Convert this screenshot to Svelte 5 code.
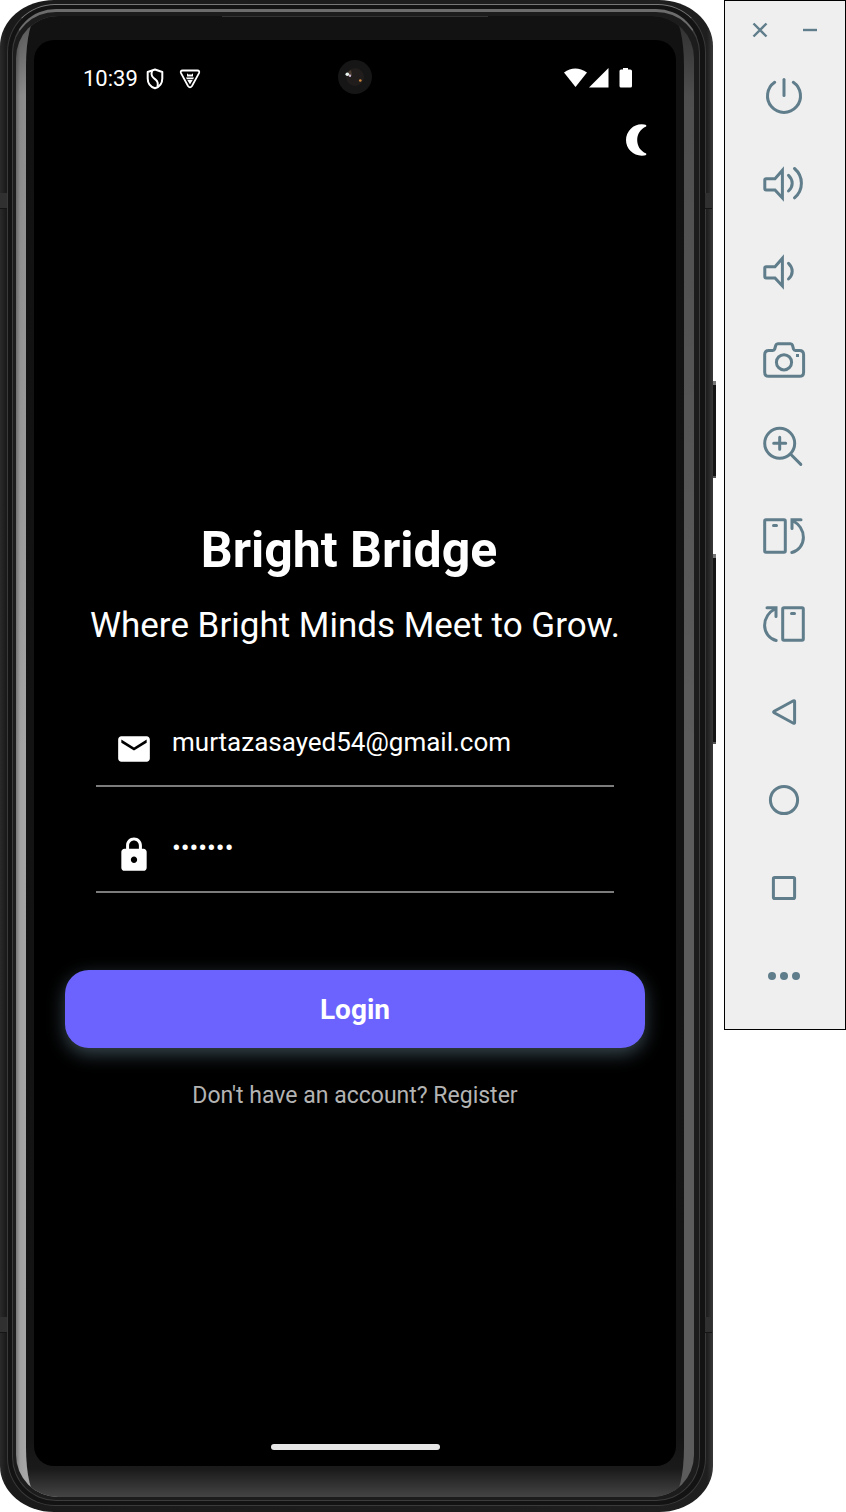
<script>
  let email = $state('murtazasayed54@gmail.com');
  let password = $state('bridge7');

  const speaker = 'M13 16.7H4.2Q2.8 16.7 2.8 18V26.6Q2.8 28 4.2 28H13L20.4 36V8.2Z';
  const phone = 'M4 5.700H22Q23.300 5.700 23.300 7V37Q23.300 38.300 22 38.300H4Q2.700 38.300 2.700 37V7Q2.700 5.700 4 5.700Z';
  const notch = 'M11.500 11.600H14.500';
  const turn = 'M39 5.700H30V14.600M30.500 6.500C37 10 41.400 16.500 41.400 23.500C41.400 30.500 36.500 37 29.800 38.500';

  const tools = [
    { label: 'Power', paths: ['M12.700 8.300A16.500 16.500 0 1 0 31.300 8.300', 'M22 5.500V21.500'] },
    { label: 'Volume up', paths: [speaker, 'M26.500 13.300Q30.200 16.800 30.200 21.200T26.500 29', 'M32.500 6.500Q39.400 12.500 39.400 21.200T32.500 35.800'] },
    { label: 'Volume down', paths: [speaker, 'M26.500 13.300Q30.200 16.800 30.200 21.200T26.500 29'] },
    {
      label: 'Take screenshot',
      paths: [
        'M6 12.400H10.800Q12.300 12.400 12.700 11L13.800 7.300Q14.300 5.700 15.800 5.700H28.500Q30 5.700 30.500 7.300L31.500 11Q32 12.400 33.400 12.400H37.500Q41.600 12.400 41.600 16.500V34.200Q41.600 38.300 37.500 38.300H6.800Q2.700 38.300 2.700 34.200V16.500Q2.700 12.400 6.800 12.400',
        'M14.400 24.300a7.600 7.600 0 1 0 15.200 0a7.600 7.600 0 1 0 -15.200 0'
      ],
      fill: 'M34 16h3v3h-3z'
    },
    { label: 'Zoom', paths: ['M2.700 17.300a15 15 0 1 0 30 0a15 15 0 1 0 -30 0', 'M11.700 17.300H23.700M17.700 11.300V23.300', 'M28.700 28.300L38.800 38.400'] },
    { label: 'Rotate left', paths: [phone, notch, turn] },
    { label: 'Rotate right', mirror: true, paths: [phone, notch, turn] },
    { label: 'Back', paths: ['M31.400 10.800Q32.600 10.300 32.600 11.600V32.400Q32.600 33.700 31.400 33.200L12.200 22.800Q11 22 12.200 21.200Z'] },
    { label: 'Home', paths: ['M8.400 22a13.600 13.600 0 1 0 27.200 0a13.600 13.600 0 1 0 -27.200 0'] },
    { label: 'Overview', paths: ['M12.700 11.400H31.300Q32.600 11.400 32.600 12.700V31.300Q32.600 32.600 31.300 32.600H12.700Q11.400 32.600 11.400 31.300V12.700Q11.400 11.400 12.700 11.400Z'] },
    { label: 'More', paths: [], fill: 'M6 22a4 4 0 1 0 8 0a4 4 0 1 0 -8 0M18 22a4 4 0 1 0 8 0a4 4 0 1 0 -8 0M30 22a4 4 0 1 0 8 0a4 4 0 1 0 -8 0' }
  ];
</script>

<div class="page">
  <div class="device">
    <span class="key power"></span>
    <span class="key volume"></span>
    <div class="shell">
      <span class="seam upper left"></span>
      <span class="seam upper right"></span>
      <span class="seam lower left"></span>
      <span class="seam lower right"></span>
      <div class="rim">
        <div class="band">
          <div class="glass">
            <div class="bezel">
              <span class="earpiece"></span>
              <div class="screen">
                <header class="status">
                  <span class="clock">10:39</span>
                  <svg class="shield" viewBox="0 0 18 22" width="18" height="22" fill="none" stroke="#fff" stroke-width="2" stroke-linejoin="round">
                    <path d="M9 1.500L16.300 4V10.500C16.300 15.500 13 19 9 20.300C5 19 1.700 15.500 1.700 10.500V4Z" />
                    <path d="M6 2.800C4.500 8 7 9.500 9.500 11.500C12 13.500 12.300 15.500 11.500 18.500" />
                  </svg>
                  <svg class="debug" viewBox="0 0 22 20" width="22" height="20">
                    <path d="M3.600 1.500H18.400Q21 1.700 20 4.200L13 17Q11 19.600 9 17L2 4.200Q1 1.700 3.600 1.500Z" fill="none" stroke="#fff" stroke-width="1.800" />
                    <path d="M8 4.300L9.200 5.500H12.800L14 4.300V7.600H8ZM7 8.600H15L14.200 10.200H7.800ZM8.300 11H13.700L11 15.600Z" fill="#fff" />
                  </svg>
                  <span class="lens">
                    <svg viewBox="0 0 34 34" width="34" height="34">
                      <circle cx="17" cy="17" r="17" fill="#161616" />
                      <circle cx="17" cy="17" r="9" fill="#211d1c" />
                      <path d="M9 15Q10 11 13 10L14 15L11 17Z" fill="#4a3c31" />
                      <circle cx="9.300" cy="14.300" r="1.800" fill="#e9f7f0" />
                      <circle cx="12" cy="15.800" r="1.200" fill="#c9b4d2" />
                      <circle cx="22.300" cy="20.500" r="1.300" fill="#d08a3c" />
                    </svg>
                  </span>
                  <svg class="signals" viewBox="0 0 70 22" width="70" height="22" fill="#fff">
                    <path d="M1 5.500Q12 -2.500 24 5.500L12.500 20Z" />
                    <path d="M45.500 1V20.500H26Z" />
                    <path d="M60 1H65V2.500H67.300Q69 2.500 69 4V19Q69 20.500 67.500 20.500H58Q56.500 20.500 56.500 19V4Q56.500 2.500 58 2.500H60Z" />
                  </svg>
                </header>
                <div class="appbar">
                  <button class="theme" aria-label="Toggle dark mode">
                    <svg viewBox="0 0 22 32" width="22" height="32" fill="#fff">
                      <path d="M15.700 .3Q18.600 .3 20.200 1V2.500C14 5 11.200 10.500 11.200 16C11.200 21.500 14 27 20.200 29.500V31Q18.600 31.700 15.700 31.700A15.700 15.700 0 0 1 15.700 .3Z" />
                    </svg>
                  </button>
                </div>
                <main>
                  <h1>Bright Bridge</h1>
                  <p class="tagline">Where Bright Minds Meet to Grow.</p>
                  <form onsubmit={(e) => e.preventDefault()}>
                    <div class="fields">
                      <label class="field">
                        <svg viewBox="0 0 24 24" width="38" height="38" fill="#fff" role="img" aria-label="Email">
                          <path d="M20 4H4c-1.100 0-2 .9-2 2v12c0 1.100.9 2 2 2h16c1.100 0 2-.9 2-2V6c0-1.100-.9-2-2-2zm0 4l-8 5-8-5V6l8 5 8-5v2z" />
                        </svg>
                        <input type="email" bind:value={email} />
                      </label>
                      <label class="field">
                        <svg viewBox="0 0 24 24" width="38" height="38" fill="#fff" role="img" aria-label="Password">
                          <path d="M18 8h-1V6c0-2.760-2.240-5-5-5S7 3.240 7 6v2H6c-1.100 0-2 .9-2 2v10c0 1.100.9 2 2 2h12c1.100 0 2-.9 2-2V10c0-1.100-.9-2-2-2zm-6 9c-1.100 0-2-.9-2-2s.9-2 2-2 2 .9 2 2-.9 2-2 2zm3.100-9H8.900V6c0-1.710 1.390-3.100 3.100-3.100s3.100 1.390 3.100 3.100v2z" />
                        </svg>
                        <input type="password" bind:value={password} />
                      </label>
                    </div>
                    <button class="login">Login</button>
                  </form>
                  <a class="register" href="#register">Don't have an account? Register</a>
                </main>
                <span class="homebar"></span>
              </div>
            </div>
          </div>
        </div>
      </div>
    </div>
  </div>

  <aside class="toolbar">
    <div class="window">
      <button aria-label="Close">
        <svg viewBox="0 0 16 16" width="16" height="16"><path d="M1.500 1.500L14.500 14.500M14.500 1.500L1.500 14.500" /></svg>
      </button>
      <button aria-label="Minimize">
        <svg viewBox="0 0 16 16" width="16" height="16"><path d="M1 8H15" /></svg>
      </button>
    </div>
    {#each tools as tool}
      <button class="tool" aria-label={tool.label}>
        <svg viewBox="0 0 44 44" width="44" height="44">
          <g transform={tool.mirror ? 'translate(44 0) scale(-1 1)' : undefined}>
            {#each tool.paths as d}
              <path {d} />
            {/each}
            {#if tool.fill}
              <path class="solid" d={tool.fill} />
            {/if}
          </g>
        </svg>
      </button>
    {/each}
  </aside>
</div>

<style>
  :global(body) {
    margin: 0;
    background: #fff;
  }
  .page {
    display: flex;
    align-items: flex-start;
    gap: 11px;
    min-height: 100vh;
    font-family: Roboto, sans-serif;
  }
  button {
    margin: 0;
    padding: 0;
    border: 0;
    background: none;
    font-family: inherit;
    cursor: pointer;
  }
  svg {
    display: block;
    flex: none;
  }
  .device,
  .shell,
  .rim,
  .band,
  .glass,
  .bezel,
  .screen {
    box-sizing: border-box;
    display: flex;
    flex-direction: column;
    flex: 1;
    min-width: 0;
  }
  .device {
    position: relative;
    min-height: 100vh;
  }
  .key {
    position: absolute;
    right: -3px;
    width: 5px;
    box-sizing: border-box;
    background: #151515;
    border-top: 4px solid #777;
    border-bottom: 2px solid #555;
  }
  .power {
    top: 381px;
    height: 97px;
  }
  .volume {
    top: 554px;
    height: 190px;
  }
  .shell {
    position: relative;
    padding: 4px 7px 6px 7px;
    border-radius: 54px / 46px;
    background: linear-gradient(90deg, #2a2a2a, #1a1a1a 6px, #1f1f1f calc(100% - 6px), #383838);
  }
  .seam {
    position: absolute;
    width: 7px;
    height: 15px;
    background: #303030;
    border-bottom: 1px solid #151515;
  }
  .seam.upper {
    top: 193px;
  }
  .seam.lower {
    bottom: 179px;
  }
  .seam.left {
    left: 0;
  }
  .seam.right {
    right: 1px;
  }
  .rim {
    padding: 4px 5px 4px 4px;
    border: 1px solid #3a3a3a;
    border-top-color: #777;
    border-radius: 48px;
    background: #131313;
  }
  .band {
    padding: 4px 5px 3px 3px;
    border: 1px solid #3c3c3c;
    border-top: 3px solid #6c6c6c;
    border-radius: 44px;
    background: #1c1c1c;
  }
  .glass {
    padding: 0 10px;
    border-radius: 42px;
    overflow: hidden;
    background:
      linear-gradient(180deg, rgba(0, 0, 0, 0.5), rgba(0, 0, 0, 0.15) 80px, transparent 50%),
      linear-gradient(90deg, #777, #a0a0a0 4px, #a6a6a6 9px, #5a5a5a 50%, #5c5c5c);
  }
  .bezel {
    position: relative;
    padding: 24px 8px 31px;
    border-radius: 12px / 50px;
    background: linear-gradient(0deg, #444, #1a1a1a 28px, #141414 60px, #121212);
  }
  .earpiece {
    position: absolute;
    top: 0;
    left: 50%;
    width: 266px;
    height: 1px;
    transform: translateX(-50%);
    background: #333;
  }
  .screen {
    border-radius: 20px;
    background: #000;
    color: #fff;
  }
  .status {
    position: relative;
    display: flex;
    align-items: center;
    height: 76px;
    padding: 0 43px 0 49px;
  }
  .clock {
    padding-top: 2px;
    font-size: 22px;
    line-height: 28px;
  }
  .shield {
    margin-left: 8px;
    padding-top: 2px;
  }
  .debug {
    margin-left: 15px;
    padding-top: 2px;
  }
  .signals {
    margin-left: auto;
  }
  .lens {
    position: absolute;
    left: 50%;
    top: 20px;
    transform: translateX(-50%);
  }
  .appbar {
    display: flex;
    justify-content: flex-end;
    align-items: center;
    height: 48px;
    padding-right: 28px;
  }
  main {
    flex: 1;
    display: flex;
    flex-direction: column;
    justify-content: center;
    padding: 28px 31px 0;
    text-align: center;
  }
  h1 {
    margin: 0 12px 26px 0;
    font-size: 50px;
    line-height: 60px;
    font-weight: 700;
  }
  .tagline {
    margin: 0 -16px 35px;
    font-size: 35px;
    line-height: 40px;
  }
  .fields {
    padding: 0 31px;
  }
  .field {
    display: flex;
    align-items: flex-end;
    gap: 19px;
    padding: 35px 0 17px 19px;
    border-bottom: 2px solid #7c7c7c;
  }
  input {
    flex: 1;
    min-width: 0;
    height: 52px;
    padding: 0;
    border: 0;
    outline: 0;
    background: none;
    color: #fff;
    font-family: inherit;
    font-size: 26px;
  }
  .login {
    width: 100%;
    height: 78px;
    margin: 77px 0 34px;
    border-radius: 24px;
    background: #6c63ff;
    box-shadow: 0 6px 18px #37474f;
    color: #fff;
    font-size: 28px;
    font-weight: 700;
  }
  .register {
    color: #b3b3b3;
    font-size: 23px;
    line-height: 28px;
    text-decoration: none;
  }
  .homebar {
    align-self: center;
    width: 169px;
    height: 6px;
    margin: 6px 0 16px;
    border-radius: 3px;
    background: #e6e6e6;
  }
  .toolbar {
    box-sizing: border-box;
    flex: none;
    display: flex;
    flex-direction: column;
    width: 122px;
    padding: 0 2px 9px 0;
    border: 1px solid #000;
    background: #efefef;
  }
  .toolbar svg {
    fill: none;
    stroke: #607d8b;
    stroke-width: 3;
    stroke-linecap: round;
  }
  .toolbar .window svg {
    stroke-width: 2;
    stroke-linecap: butt;
  }
  .toolbar .window path {
    stroke-width: 2.4;
  }
  .toolbar .solid {
    fill: #607d8b;
    stroke: none;
  }
  .window {
    display: flex;
    justify-content: center;
    gap: 34px;
    padding: 21px 0 14px 2px;
  }
  .tool {
    display: flex;
    align-items: center;
    justify-content: center;
    height: 88px;
  }
</style>
